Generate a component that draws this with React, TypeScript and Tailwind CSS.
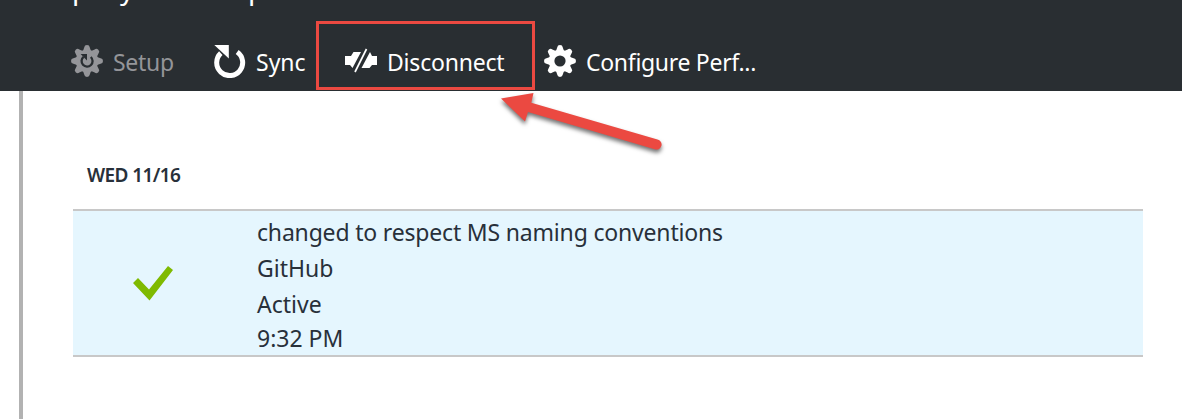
import React from "react";

const TEETH = [0, 45, 90, 135, 180, 225, 270, 315];

function Gear({ children }: { children: React.ReactNode }) {
  return (
    <svg width="32" height="32" viewBox="-16 -16 32 32" className="block shrink-0" fill="currentColor">
      <circle r="11.3" />
      {TEETH.map((a) => (
        <path key={a} transform={`rotate(${a})`} d="M-4 -10 L-2.8 -13.6 Q-2.5 -16 0 -16 Q2.5 -16 2.8 -13.6 L4 -10Z" />
      ))}
      {children}
    </svg>
  );
}

export default function App() {
  return (
    <div className="relative h-[419px] w-[1182px] overflow-hidden bg-white font-['Noto_Sans','Open_Sans',sans-serif] text-[#28303a]">
      <header className="h-[91px] bg-[#292e32] text-white">
        <div className="flex h-[22px] items-start overflow-hidden pl-[72px] text-[28px] leading-[28px]">
          <span className="-mt-[26px] w-[48px]">p</span>
          <span className="-mt-[26px] w-[128px]">y</span>
          <span className="-mt-[26px]">p</span>
        </div>
        <nav className="flex h-[69px] items-start pt-[23px] text-[23px] leading-[34px] whitespace-nowrap">
          <div className="flex w-[213px] pl-[71px] text-[#949599]">
            <Gear>
              <path d="M3.8 -4A5.5 5.5 0 1 1 -3.4 -4.2" fill="none" stroke="#292e32" strokeWidth="2.3" />
              <path d="M-6.4 -7H0V-0.6Z" fill="#292e32" />
            </Gear>
            <span className="ml-[10px] tracking-[-0.3px]">Setup</span>
          </div>
          <div className="flex w-[131px] pl-px">
            <svg width="32" height="34" viewBox="0 0 32 34" className="-mt-[1px] block shrink-0">
              <path d="M23.2 8A13 13 0 1 1 6.8 9.1" fill="none" stroke="white" strokeWidth="5" />
              <path d="M0.3 1H14.8V14.6Z" fill="white" />
            </svg>
            <span className="ml-[10px]">Sync</span>
          </div>
          <div className="flex w-[200px] pl-px">
            <svg width="33" height="26" viewBox="0 0 33 26" className="mt-[3px] block shrink-0" fill="white">
              <path d="M0 8H6L8.5 4H16L7.5 20L5 17H0Z" />
              <path d="M25 4L27 8H32V17H27L24.5 20H16.5Z" />
              <path d="M21.5 1L10 24" stroke="white" strokeWidth="1.7" />
            </svg>
            <span className="ml-[9px] tracking-[-0.2px]">Disconnect</span>
          </div>
          <div className="flex">
            <Gear><circle r="5.6" fill="#292e32" /></Gear>
            <span className="ml-[10px] tracking-[-0.3px]">Configure Perf...</span>
          </div>
        </nav>
      </header>
      <main className="ml-[19px] h-[328px] border-l-4 border-[#b2b2b2] pl-[50px]">
        <h2 className="h-[118px] pt-[69px] pl-[14px] text-[19px] leading-[30px] font-semibold tracking-[-0.6px]">WED 11/16</h2>
        <section className="flex h-[148px] w-[1070px] border-y-2 border-[#c8c8c8] bg-[#e5f6fe]">
          <div className="w-[184px] pt-[54px] pl-[60px]">
            <svg width="40" height="36" viewBox="0 0 40 36">
              <path d="M0 18L5 13L16 24.5L35 1L40 5L16.5 35.5Z" fill="#7fba00" />
            </svg>
          </div>
          <div className="text-[23px] whitespace-nowrap">
            <p className="h-[36px] leading-[43px] tracking-[-0.18px]">changed to respect MS naming conventions</p>
            <p className="h-[36px] leading-[43px]">GitHub</p>
            <p className="h-[35px] leading-[43px]">Active</p>
            <p className="h-[35px] leading-[41px]">9:32 PM</p>
          </div>
        </section>
      </main>
      <div className="absolute top-[21px] left-[316px] h-[69px] w-[219px] border-3 border-[#eb4941]" />
      <svg className="absolute top-[85px] left-[490px]" width="190" height="85" viewBox="490 85 190 85">
        <path
          className="drop-shadow-[0_3px_2px_rgba(0,0,0,0.55)]"
          d="M501 98.5L533.5 93L531.3 102.7L657.5 139.5A5 5 0 0 1 655.5 149.5L528 112L525 121.5Z"
          fill="#eb4941"
        />
      </svg>
    </div>
  );
}
